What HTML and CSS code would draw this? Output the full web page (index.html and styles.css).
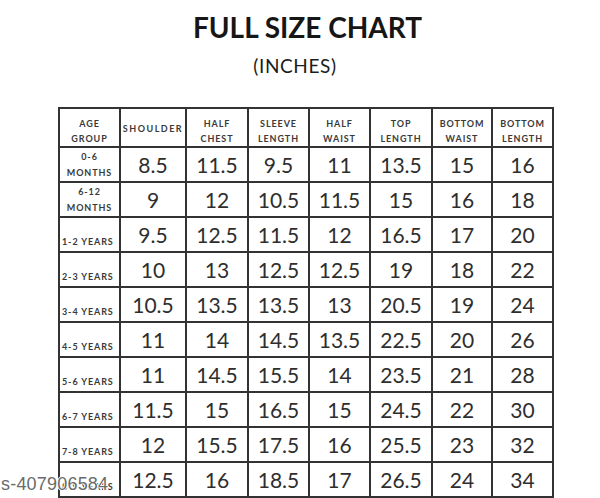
FILE: index.html
```html
<!DOCTYPE html>
<html>
<head>
<meta charset="utf-8">
<link rel="stylesheet" href="styles.css">
</head>
<body>
<div class="page">
  <h1 class="title">FULL SIZE CHART</h1>
  <p class="unit">(INCHES)</p>
  <table class="chart">
    <colgroup>
      <col class="c1"><col class="c2"><col class="c3"><col class="c4"><col class="c5"><col class="c6"><col class="c7"><col class="c8">
    </colgroup>
    <thead>
      <tr class="head">
        <th>AGE<br>GROUP</th>
        <th class="wide">SHOULDER</th>
        <th>HALF<br>CHEST</th>
        <th>SLEEVE<br>LENGTH</th>
        <th>HALF<br>WAIST</th>
        <th>TOP<br>LENGTH</th>
        <th>BOTTOM<br>WAIST</th>
        <th>BOTTOM<br>LENGTH</th>
      </tr>
    </thead>
    <tbody>
      <tr><td class="age two">0-6<br>MONTHS</td><td>8.5</td><td>11.5</td><td>9.5</td><td>11</td><td>13.5</td><td>15</td><td>16</td></tr>
      <tr><td class="age two">6-12<br>MONTHS</td><td>9</td><td>12</td><td>10.5</td><td>11.5</td><td>15</td><td>16</td><td>18</td></tr>
      <tr><td class="age">1-2 YEARS</td><td>9.5</td><td>12.5</td><td>11.5</td><td>12</td><td>16.5</td><td>17</td><td>20</td></tr>
      <tr><td class="age">2-3 YEARS</td><td>10</td><td>13</td><td>12.5</td><td>12.5</td><td>19</td><td>18</td><td>22</td></tr>
      <tr><td class="age">3-4 YEARS</td><td>10.5</td><td>13.5</td><td>13.5</td><td>13</td><td>20.5</td><td>19</td><td>24</td></tr>
      <tr><td class="age">4-5 YEARS</td><td>11</td><td>14</td><td>14.5</td><td>13.5</td><td>22.5</td><td>20</td><td>26</td></tr>
      <tr><td class="age">5-6 YEARS</td><td>11</td><td>14.5</td><td>15.5</td><td>14</td><td>23.5</td><td>21</td><td>28</td></tr>
      <tr><td class="age">6-7 YEARS</td><td>11.5</td><td>15</td><td>16.5</td><td>15</td><td>24.5</td><td>22</td><td>30</td></tr>
      <tr><td class="age">7-8 YEARS</td><td>12</td><td>15.5</td><td>17.5</td><td>16</td><td>25.5</td><td>23</td><td>32</td></tr>
      <tr><td class="age">8-9 YEARS</td><td>12.5</td><td>16</td><td>18.5</td><td>17</td><td>26.5</td><td>24</td><td>34</td></tr>
    </tbody>
  </table>
  <div class="watermark">s-407906584</div>
</div>
</body>
</html>
```
FILE: styles.css
```css
html, body {
  margin: 0;
  padding: 0;
  background: #ffffff;
}

.page {
  position: relative;
  width: 600px;
  height: 498px;
  overflow: hidden;
  font-family: Lato, "Open Sans", sans-serif;
  color: #2a2a2a;
}

.title {
  margin: 0;
  padding: 13px 0 0 15px;
  font-size: 28px;
  line-height: 28px;
  font-weight: 700;
  text-align: center;
  color: #161616;
}

.unit {
  margin: 15px 0 0 0;
  padding-right: 10px;
  font-size: 19px;
  line-height: 20px;
  font-weight: 400;
  letter-spacing: 0.6px;
  text-align: center;
  color: #1c1c1c;
}

.chart {
  margin: 31px 0 0 58px;
  width: 495px;
  border-collapse: collapse;
  table-layout: fixed;
}

.c1 { width: 61px; }
.c2 { width: 66px; }
.c3 { width: 62px; }
.c4 { width: 61px; }
.c5 { width: 61px; }
.c6 { width: 62px; }
.c7 { width: 60px; }
.c8 { width: 61px; }

.chart th,
.chart td {
  border: 2px solid #333333;
  padding: 0;
  text-align: center;
  vertical-align: middle;
}

.head {
  height: 39px;
}

.chart th {
  font-size: 9px;
  line-height: 15px;
  font-weight: 700;
  letter-spacing: 0.9px;
  color: #3a3a3a;
  padding-top: 6px;
}

.chart th.wide {
  letter-spacing: 1.5px;
  padding-top: 1px;
}

.chart tbody tr {
  height: 35px;
}

.chart td {
  font-size: 21px;
  line-height: 24px;
  color: #2e2e2e;
}

.chart td.age {
  font-size: 9px;
  line-height: 12px;
  font-weight: 700;
  letter-spacing: 0.9px;
  color: #3a3a3a;
  text-align: left;
  vertical-align: bottom;
  padding: 0 0 3px 2px;
  white-space: nowrap;
}

.chart td.age.two {
  text-align: center;
  vertical-align: middle;
  line-height: 16px;
  padding: 0;
}

.watermark {
  position: absolute;
  left: 1px;
  top: 474px;
  font-family: "Liberation Sans", Arial, sans-serif;
  font-size: 18px;
  line-height: 20px;
  color: #6a6a6a;
  letter-spacing: 0.2px;
  text-shadow: 1px 0 0 #fff, -1px 0 0 #fff, 0 1px 0 #fff, 0 -1px 0 #fff;
}
```
